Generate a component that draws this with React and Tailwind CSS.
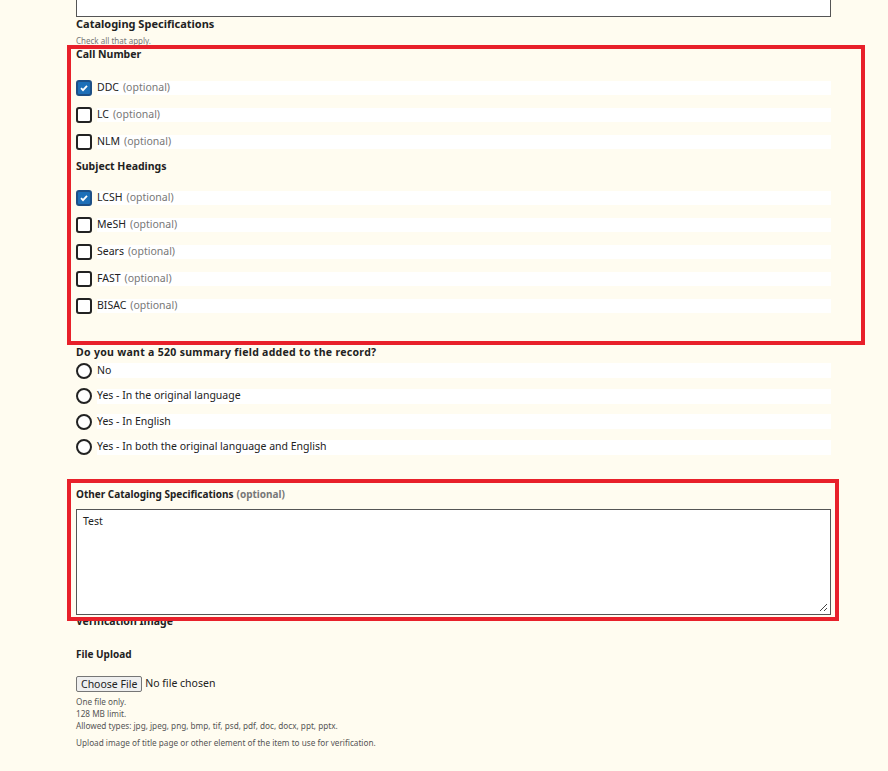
export default function App() {
  const Check = ({ checked, label }) => (
    <div className="flex items-center h-[27px]">
      <div className={`w-[16px] h-[16px] rounded-[3px] border-2 flex items-center justify-center ${checked ? "border-[#1d4f86] bg-[#1d6fb8]" : "border-[#222] bg-white"}`}>
        {checked && (
          <svg width="10" height="10" viewBox="0 0 10 10"><path d="M2 5.2l2 2 4-4.4" stroke="white" strokeWidth="1.8" fill="none" /></svg>
        )}
      </div>
      <div className="ml-[5px] flex-1 bg-white h-[14px] flex items-center text-[10.5px] text-[#222]">
        {label}<span className="text-[#777] ml-[4px]">(optional)</span>
      </div>
    </div>
  );
  const Radio = ({ label }) => (
    <div className="flex items-center h-[25.5px]">
      <div className="w-[16px] h-[16px] rounded-full border-2 border-[#222] bg-white" />
      <div className="ml-[5px] flex-1 bg-white h-[15px] flex items-center text-[10.5px] text-[#222]">{label}</div>
    </div>
  );
  return (
    <div className="relative w-[888px] h-[771px] bg-[#fffcf0] overflow-hidden" style={{ fontFamily: "'Noto Sans', 'Open Sans', sans-serif" }}>
      <div className="absolute left-[67px] top-[45px] w-[798px] h-[300px] border-[4px] border-[#e8202a]" />
      <div className="absolute left-[67px] top-[479px] w-[772px] h-[142px] border-[4px] border-[#e8202a]" />
      <div className="ml-[76px] w-[755px]">
        <div className="h-[17px] border border-t-0 border-[#555] bg-white" />
        <div className="mt-[-1px] text-[11px] font-bold text-[#222] h-[16px] leading-[16px]">Cataloging Specifications</div>
        <div className="text-[8px] text-[#777] mt-[4px] h-[10px] leading-[10px]">Check all that apply.</div>
        <div className="text-[10.5px] font-bold text-[#222] h-[14px] leading-[14px] mt-[1px]">Call Number</div>
        <div className="mt-[13px]">
          <Check checked label="DDC" />
          <Check label="LC" />
          <Check label="NLM" />
        </div>
        <div className="text-[10.5px] font-bold text-[#222] h-[20px] leading-[20px] mt-[1px]">Subject Headings</div>
        <div className="mt-[8px]">
          <Check checked label="LCSH" />
          <Check label="MeSH" />
          <Check label="Sears" />
          <Check label="FAST" />
          <Check label="BISAC" />
        </div>
        <div className="mt-[26px] text-[10.5px] font-bold text-[#222] h-[14px] leading-[14px] tracking-[0.3px]">Do you want a 520 summary field added to the record?</div>
        <div className="mt-[-1px]">
          <Radio label="No" />
          <Radio label="Yes - In the original language" />
          <Radio label="Yes - In English" />
          <Radio label="Yes - In both the original language and English" />
        </div>
        <div className="mt-[27px] text-[10px] font-bold text-[#222] h-[14px] leading-[14px]">Other Cataloging Specifications<span className="text-[#777] ml-[3px]">(optional)</span></div>
        <div className="mt-[8px] h-[106px] border border-[#555] bg-white relative px-[6px] py-[4px] text-[10.5px] text-[#222]">
          Test
          <svg className="absolute right-[2px] bottom-[2px]" width="9" height="9" viewBox="0 0 9 9"><path d="M8 1L1 8M8 5L5 8" stroke="#444" strokeWidth="1" /></svg>
        </div>
        <div className="text-[10.5px] font-bold text-[#222] h-[14px] leading-[14px] mt-[-1px]">Verification Image</div>
        <div className="mt-[19px] text-[10px] font-bold text-[#222] h-[14px] leading-[14px]">File Upload</div>
        <div className="mt-[15px] flex items-center text-[10.5px] text-[#222]">
          <div className="border border-[#767676] bg-[#efefef] rounded-[2px] px-[4px] h-[16px] leading-[14px]">Choose File</div>
          <span className="ml-[3px]">No file chosen</span>
        </div>
        <div className="mt-[4px] text-[8.2px] text-[#555] leading-[12px]">
          <div>One file only.</div>
          <div>128 MB limit.</div>
          <div>Allowed types: jpg, jpeg, png, bmp, tif, psd, pdf, doc, docx, ppt, pptx.</div>
          <div className="mt-[5px]">Upload image of title page or other element of the item to use for verification.</div>
        </div>
      </div>
    </div>
  );
}
